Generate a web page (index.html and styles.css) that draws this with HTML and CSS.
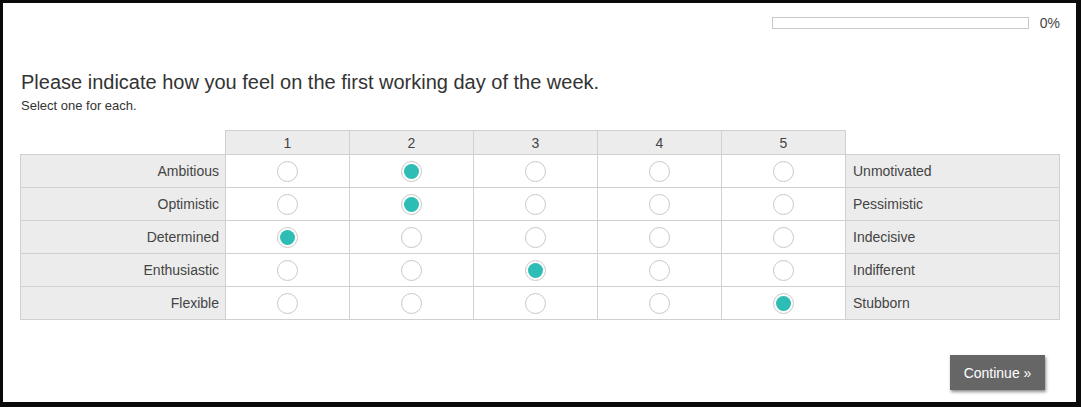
FILE: index.html
```html
<!DOCTYPE html>
<html>
<head>
<meta charset="utf-8">
<link rel="stylesheet" href="styles.css">
</head>
<body>
<div class="frame">
  <div class="progress-row">
    <div class="progress-bar"><div class="progress-fill"></div></div>
    <span class="progress-label">0%</span>
  </div>
  <h1 class="question">Please indicate how you feel on the first working day of the week.</h1>
  <p class="hint">Select one for each.</p>
  <table class="matrix">
    <colgroup>
      <col class="c-left"><col class="c-opt"><col class="c-opt"><col class="c-opt"><col class="c-opt"><col class="c-opt"><col class="c-right">
    </colgroup>
    <thead>
      <tr>
        <th class="blank"></th>
        <th class="head">1</th>
        <th class="head">2</th>
        <th class="head">3</th>
        <th class="head">4</th>
        <th class="head">5</th>
        <th class="blank"></th>
      </tr>
    </thead>
    <tbody>
      <tr>
        <td class="lbl-left">Ambitious</td>
        <td class="opt"><span class="radio"></span></td>
        <td class="opt"><span class="radio on"></span></td>
        <td class="opt"><span class="radio"></span></td>
        <td class="opt"><span class="radio"></span></td>
        <td class="opt"><span class="radio"></span></td>
        <td class="lbl-right">Unmotivated</td>
      </tr>
      <tr>
        <td class="lbl-left">Optimistic</td>
        <td class="opt"><span class="radio"></span></td>
        <td class="opt"><span class="radio on"></span></td>
        <td class="opt"><span class="radio"></span></td>
        <td class="opt"><span class="radio"></span></td>
        <td class="opt"><span class="radio"></span></td>
        <td class="lbl-right">Pessimistic</td>
      </tr>
      <tr>
        <td class="lbl-left">Determined</td>
        <td class="opt"><span class="radio on"></span></td>
        <td class="opt"><span class="radio"></span></td>
        <td class="opt"><span class="radio"></span></td>
        <td class="opt"><span class="radio"></span></td>
        <td class="opt"><span class="radio"></span></td>
        <td class="lbl-right">Indecisive</td>
      </tr>
      <tr>
        <td class="lbl-left">Enthusiastic</td>
        <td class="opt"><span class="radio"></span></td>
        <td class="opt"><span class="radio"></span></td>
        <td class="opt"><span class="radio on"></span></td>
        <td class="opt"><span class="radio"></span></td>
        <td class="opt"><span class="radio"></span></td>
        <td class="lbl-right">Indifferent</td>
      </tr>
      <tr>
        <td class="lbl-left">Flexible</td>
        <td class="opt"><span class="radio"></span></td>
        <td class="opt"><span class="radio"></span></td>
        <td class="opt"><span class="radio"></span></td>
        <td class="opt"><span class="radio"></span></td>
        <td class="opt"><span class="radio on"></span></td>
        <td class="lbl-right">Stubborn</td>
      </tr>
    </tbody>
  </table>
  <div class="actions">
    <button class="continue">Continue &raquo;</button>
  </div>
</div>
</body>
</html>
```
FILE: styles.css
```css
html, body {
  margin: 0;
  padding: 0;
  background: #fff;
}
body {
  font-family: "Liberation Sans", Arial, sans-serif;
  color: #333;
}
.frame {
  width: 1081px;
  height: 407px;
  box-sizing: border-box;
  border-style: solid;
  border-color: #0a0a0a;
  border-width: 3px 5px 5px 3px;
  padding: 14px 0 0 17px;
  display: flex;
  flex-direction: column;
}
.progress-row {
  display: flex;
  align-items: center;
  justify-content: flex-end;
  height: 12px;
  padding-right: 16px;
}
.progress-bar {
  width: 255px;
  height: 10px;
  border: 1px solid #c8c8c8;
  background: #fff;
}
.progress-fill {
  width: 0;
  height: 100%;
}
.progress-label {
  font-size: 14px;
  color: #444;
  margin-left: 11px;
  line-height: 12px;
}
.question {
  margin: 41px 0 0 1px;
  font-size: 20px;
  font-weight: normal;
  line-height: 24px;
  color: #333;
}
.hint {
  margin: 4px 0 0 1px;
  font-size: 13px;
  line-height: 16px;
  color: #333;
}
.matrix {
  margin-top: 16px;
  border-collapse: collapse;
  table-layout: fixed;
  width: 1040px;
  font-size: 14px;
  color: #444;
}
.c-left { width: 205px; }
.c-opt { width: 124px; }
.c-right { width: 214px; }
.matrix th, .matrix td {
  padding: 0;
}
.blank {
  border: none;
}
.head {
  height: 23px;
  background: #ececec;
  border: 1px solid #d0d0d0;
  font-weight: normal;
  text-align: center;
}
.matrix td {
  height: 32px;
  border: 1px solid #d0d0d0;
}
.lbl-left {
  background: #ececec;
  text-align: right;
  padding-right: 6px !important;
}
.lbl-right {
  background: #ececec;
  text-align: left;
  padding-left: 7px !important;
}
.opt {
  text-align: center;
  background: #fff;
}
.radio {
  display: inline-block;
  width: 19px;
  height: 19px;
  border: 1px solid #c8c8c8;
  border-radius: 50%;
  background: #fff;
  vertical-align: middle;
  box-sizing: content-box;
  position: relative;
}
.radio.on::after {
  content: "";
  position: absolute;
  left: 2px;
  top: 2px;
  width: 15px;
  height: 15px;
  border-radius: 50%;
  background: #2dbdb5;
}
.actions {
  display: flex;
  justify-content: flex-end;
  padding-right: 31px;
  margin-top: 35px;
}
.continue {
  width: 95px;
  height: 35px;
  background: #666;
  color: #fff;
  border: none;
  font-family: "Liberation Sans", Arial, sans-serif;
  font-size: 14px;
  box-shadow: 1px 2px 3px rgba(0,0,0,0.45);
  padding: 0;
}
```
